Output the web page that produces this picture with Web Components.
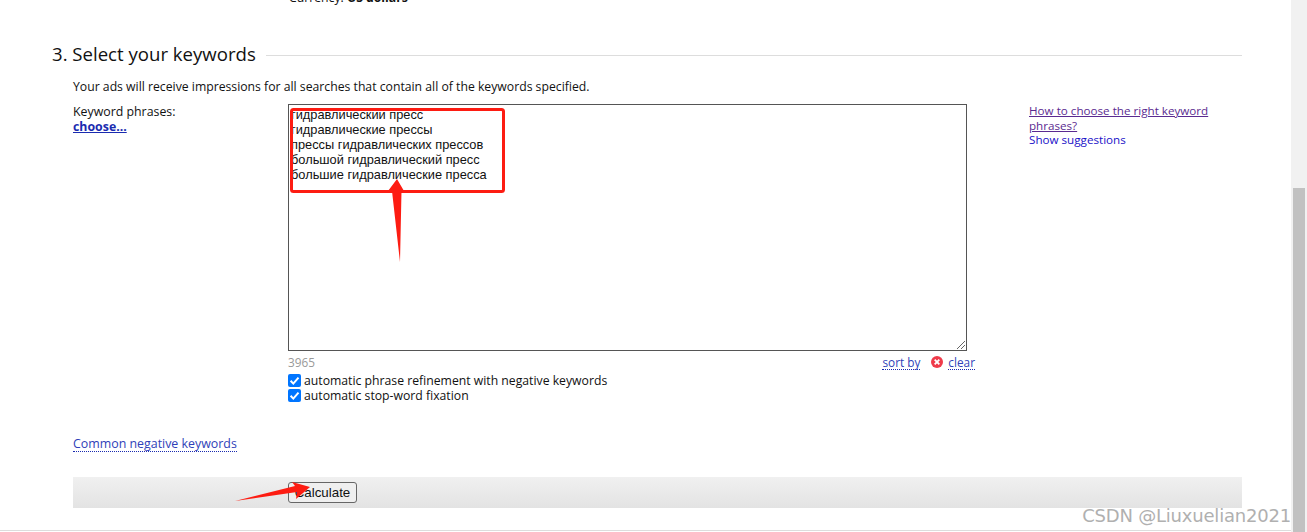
<!DOCTYPE html>
<html>
<head>
<meta charset="utf-8">
<style>
  html, body { margin: 0; height: 532px; overflow: hidden; background: white; }
  body { font: 12.22px "Open Sans", "Noto Sans", sans-serif; color: #111; }
</style>
</head>
<body>
<ad-page>
  <wizard-step slot="step" heading="3. Select your keywords">
    <keyword-form></keyword-form>
  </wizard-step>
</ad-page>
<script>
const define = (name, html, extra = {}) => {
  const template = document.createElement("template");
  template.innerHTML = html.trim();
  customElements.define(name, class extends HTMLElement {
    constructor() {
      super();
      this.attachShadow({mode: "open"}).appendChild(template.content.cloneNode(true));
      if (extra.init) extra.init.call(this);
    }
  });
};

define("page-scrollbar", `
<style>
  :host { display: flex; flex-direction: column; justify-content: flex-end; width: 16px; background: #f1f1f1; box-sizing: border-box; padding: 188px 2px 0; }
  div { flex: 1; background: #c1c1c1; }
</style>
<div></div>`);

define("dotted-link", `
<style>
  :host { display: inline-block; color: #2f3fb8; line-height: 14px; border-bottom: 1px dotted #1a2bb0; cursor: pointer; }
</style>
<slot></slot>`);

define("wizard-step", `
<style>
  :host { display: block; }
  header { display: flex; align-items: center; gap: 10px; height: 24px; }
  h2 { margin: 0 0 4px; font: 400 18.6px "Open Sans", sans-serif; color: #111; white-space: nowrap; }
  i { flex: 1; height: 1px; background: #ddd; }
  section { padding: 0 0 0 21px; }
</style>
<header><h2></h2><i></i></header>
<section><slot></slot></section>`, {
  init() { this.shadowRoot.querySelector("h2").textContent = this.getAttribute("heading"); }
});

define("keyword-box", `
<style>
  :host { display: block; position: relative; box-sizing: border-box; height: 247px; border: 1px solid #555; background: white; padding: 2px; overflow: hidden; }
  pre { margin: 0; font: 12.8px/15px "Liberation Sans", Arial, sans-serif; color: #111; }
  svg { position: absolute; right: 0; bottom: 0; }
</style>
<pre>гидравлический пресс
гидравлические прессы
прессы гидравлических прессов
большой гидравлический пресс
большие гидравлические пресса</pre>
<svg width="12" height="12" viewBox="0 0 12 12"><path d="M3 11L11 3M7 11L11 7" stroke="#666" stroke-width="1" fill="none"/></svg>`);

define("check-row", `
<style>
  :host { display: flex; align-items: center; gap: 3px; height: 15px; }
  span.box { width: 13px; height: 13px; border-radius: 2px; background: #0075ff; display: flex; }
</style>
<span class="box"><svg width="13" height="13" viewBox="0 0 13 13"><path d="M2.6 6.8L5.3 9.6L10.5 3.6" stroke="#fff" stroke-width="2" fill="none"/></svg></span>
<slot></slot>`);

define("keyword-form", `
<style>
  :host { display: block; }
  .intro { height: 20px; line-height: 20px; margin-top: 10px; }
  .row { display: grid; grid-template-columns: 215px 679px 62px 180px; margin-top: 7px; }
  .label { line-height: 15px; font-size: 12.35px; }
  a { color: #1a2bb0; font-weight: 700; }
  .help { line-height: 14.5px; grid-column: 4; color: #1a10c8; font-size: 11.65px; }
  .help u { color: #5a2a90; }
  .meta { display: flex; justify-content: space-between; align-items: center; height: 22px; margin-right: -8px; color: #999; font-size: 11.8px; }
  .actions { display: flex; align-items: center; }
  .clear { width: 12px; height: 12px; margin: 0 5px 0 11px; }
  .negative { margin-top: 32px; height: 16px; font-size: 12.4px; }
  .bar { height: 31px; margin-top: 26px; padding-left: 215px; display: flex; align-items: center; background: linear-gradient(#f0f0f0, #e3e3e3); }
  button { width: 69px; height: 21px; padding: 0; font: 13.33px "Liberation Sans", Arial, sans-serif; color: #111; background: #efefef; border: 1px solid #666; border-radius: 3px; }
</style>
<div class="intro">Your ads will receive impressions for all searches that contain all of the keywords specified.</div>
<div class="row">
  <div class="label">Keyword phrases:<br><a href="#">choose...</a></div>
  <div>
    <keyword-box></keyword-box>
    <div class="meta">
      <span>3965</span>
      <span class="actions">
        <dotted-link>sort by</dotted-link>
        <svg class="clear" viewBox="0 0 13 13"><circle cx="6.5" cy="6.5" r="6.5" fill="#ef3b4a"/><path d="M4 4L9 9M9 4L4 9" stroke="#fff" stroke-width="2"/></svg>
        <dotted-link>clear</dotted-link>
      </span>
    </div>
    <check-row>automatic phrase refinement with negative keywords</check-row>
    <check-row>automatic stop-word fixation</check-row>
  </div>
  <div class="help"><u>How to choose the right keyword phrases?</u><br>Show suggestions</div>
</div>
<div class="negative"><dotted-link>Common negative keywords</dotted-link></div>
<div class="bar"><button>Calculate</button></div>`);

define("screenshot-marks", `
<style>
  :host { position: absolute; inset: 0; pointer-events: none; }
  svg { position: absolute; left: 0; top: 0; }
  span { position: absolute; right: 16px; bottom: 6px; font: 18px "DejaVu Sans", sans-serif; color: #b0b0b0; letter-spacing: -0.2px; }
</style>
<svg width="1307" height="532" viewBox="0 0 1307 532">
  <rect x="291.5" y="109.5" width="212" height="82" rx="2" fill="none" stroke="#fd1c12" stroke-width="3"/>
  <path d="M397 179L404 191L401.5 191L400 262L392 191L388 191Z" fill="#fd1c12"/>
  <path d="M235 501L295 486L292 482L310 487L296 499L297 492Z" fill="#fd1c12"/>
</svg>
<span>CSDN @Liuxuelian2021</span>`);

define("ad-page", `
<style>
  :host { display: flex; position: relative; height: 532px; overflow: hidden; }
  main { flex: 1; min-width: 0; box-sizing: border-box; padding: 0 49px 0 52px; border-bottom: 1px solid #ddd; height: 531px; }
  .currency { margin: -9px 0 0 237px; height: 52px; line-height: 14px; }
  b { font-weight: 700; }
</style>
<main>
  <div class="currency">Currency: <b>US dollars</b></div>
  <slot name="step"></slot>
</main>
<page-scrollbar></page-scrollbar>
<screenshot-marks></screenshot-marks>`);
</script>
</body>
</html>
